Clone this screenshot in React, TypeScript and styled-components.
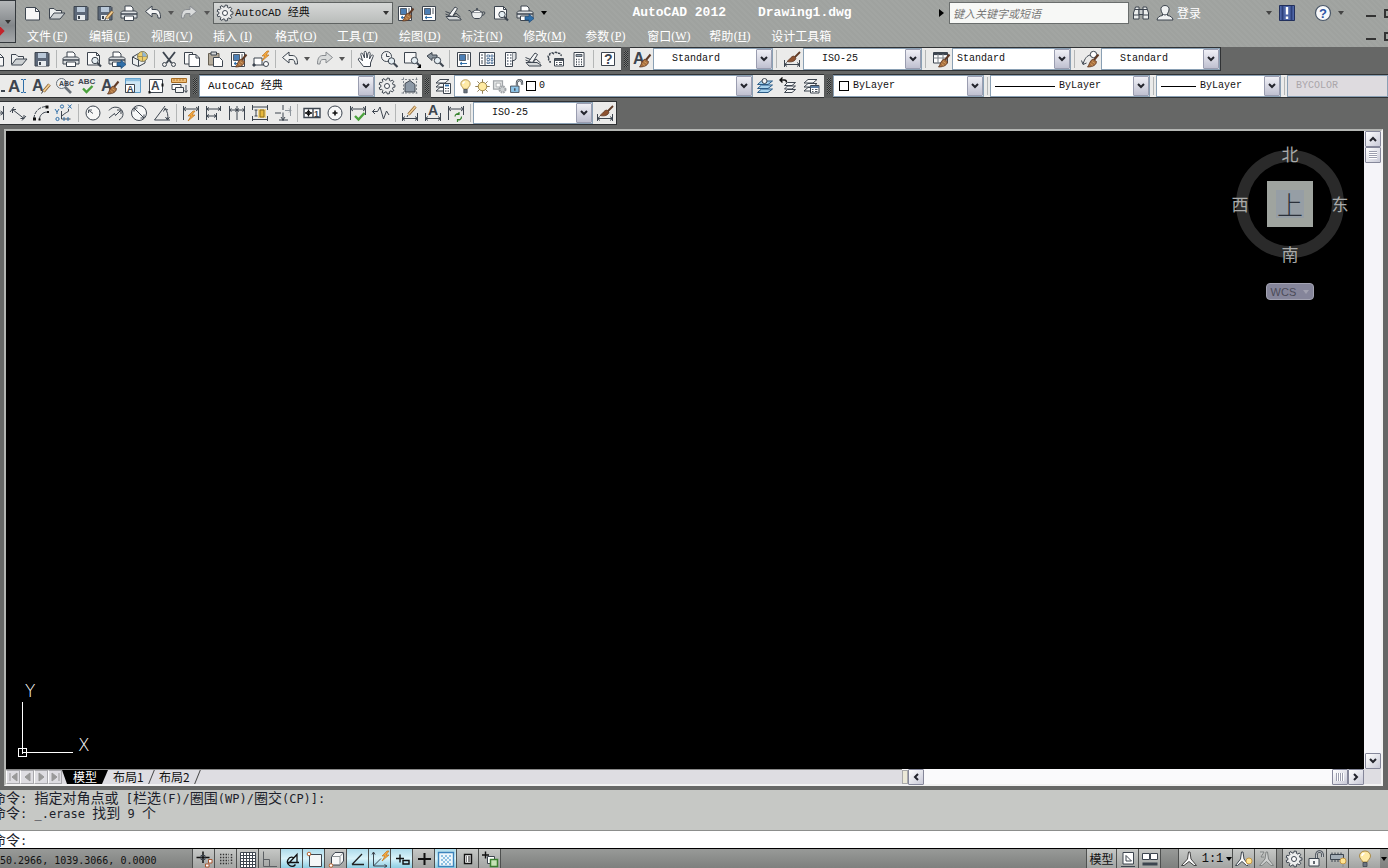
import React from 'react';
import styled, { createGlobalStyle, css } from 'styled-components';

const CJK = '"Noto Sans CJK SC", sans-serif';
const MONO = '"Liberation Mono", "Noto Sans CJK SC", monospace';
const INK = '#3d454f';
const BLUE = '#2f6ea8';

const GlobalStyle = createGlobalStyle`
  * { box-sizing: border-box; }
  html, body { margin: 0; background: #666766; }
  body { overflow: hidden; font: 12px/16px ${CJK}; color: #111; }
  button, input, select { font: inherit; color: inherit; margin: 0; padding: 0; border: 0; background: none; border-radius: 0; }
`;

/* ---------- icon drawings, all on a 20 x 20 grid ---------- */

const Letter = ({ x, y, size = 15, heavy, children }: { x: number; y: number; size?: number; heavy?: boolean; children: string }) => (
  <text x={x} y={y} fontSize={size} fontFamily="Liberation Sans, sans-serif" fontWeight={heavy ? 'bold' : 'normal'} fill={INK} stroke={heavy ? 'none' : INK} strokeWidth=".4">
    {children}
  </text>
);

const gearPath = (teeth: number, outer: number, inner: number) => {
  const pts: string[] = [];
  const step = (Math.PI * 2) / teeth;
  for (let i = 0; i < teeth; i++) {
    [[-0.3, inner], [-0.2, outer], [0.2, outer], [0.3, inner]].forEach(([k, r]) => {
      const a = (i + k) * step;
      pts.push(`${(10 + r * Math.cos(a)).toFixed(2)} ${(10 + r * Math.sin(a)).toFixed(2)}`);
    });
  }
  return `M${pts.join('L')}z`;
};

const brush = (
  <g>
    <path d="M18.500 5.500l-4.500 5.500" stroke="#5f3a26" strokeWidth="2" />
    <path d="M13 10l3.500 2.500c0 3-3 5.500-9 5.500c2-2 2-6.500 5.500-8z" fill="#a9713f" stroke="#5f3a26" strokeWidth=".8" />
    <path d="M12 12.500l3 2M10.500 14.500l2.500 2" stroke="#d9a566" strokeWidth=".8" />
  </g>
);
const pencil = (
  <g>
    <path d="M17.500 8.500l-6 7" stroke="#8a6334" strokeWidth="3.400" />
    <path d="M17.500 8.500l-6 7" stroke="#f3cf92" strokeWidth="1.800" />
    <path d="M11 15l-1.500 2.500" stroke="#333" />
  </g>
);
const floppy = (
  <g>
    <path d="M3 3.500h13l1 1V17H3z" fill="#5c6879" />
    <path d="M6 4h8v5H6z" fill="#b9c8d8" stroke="none" />
    <path d="M6 12h8v5H6z" fill="#e8ecef" stroke="none" />
    <path d="M7 13h2v3H7z" fill={INK} stroke="none" />
  </g>
);
const printer = (
  <g>
    <path d="M6 9V3h6l2 2v4" fill="#fff" />
    <path d="M3.500 8h13l1.500 1.500V15H2V9.500z" fill="#dcdfe1" />
    <path d="M2 11h16" strokeWidth="1.500" />
    <path d="M5.500 13h9v4.500h-9z" fill="#fff" />
  </g>
);
const panel = (
  <g>
    <path d="M3.500 3.500h13v14h-13z" fill="#fff" />
    <path d="M5.500 5.500h6v6h-6z" fill="#4c7fb5" stroke={INK} strokeWidth=".8" />
    <path d="M13 6h2M13 8h2M13 10h2" strokeWidth=".9" />
    <path d="M6 14.500h7M8 13l-2 1.500L8 16" stroke={BLUE} />
  </g>
);
const sheets = (
  <g>
    <path d="M3 15l4-3.500h9l-4 3.500z" fill="#f6f7f7" />
    <path d="M3 11l4-3.500h9L12 11z" fill="#f6f7f7" />
    <path d="M3 7l4-3.500h9L12 7z" fill="#f6f7f7" />
  </g>
);
const gear = (r: number) => (
  <g>
    <path d={gearPath(9, 8, 6.2)} fill="#eceded" />
    <circle cx="10" cy="10" r={r} fill="#fff" />
  </g>
);
const bolt = <path d="M15 2l-5 5h3l-3 5l7-6h-3l3-4z" fill="#f5a93f" stroke="#c07720" strokeWidth=".7" />;
const dimLine = <path d="M2.500 10v8M17.500 10v8M2.500 15.500h15M5 13.500l-2.500 2l2.500 2M15 13.500l2.500 2l-2.500 2" />;
const topDim = <path d="M2.500 3v14M17.500 3v9M2.500 6h15M5 4L2.500 6L5 8M15 4l2.500 2L15 8" />;
const lens = (x: number, y: number) => (
  <g>
    <path d={`M${x + 2} ${y + 2}l4 4`} strokeWidth="2.200" />
    <circle cx={x} cy={y} r="3.200" fill="#e4edf2" />
  </g>
);
const miniBulb = (
  <g>
    <circle cx="15" cy="12" r="3" fill="#ffe493" stroke="#c08a2e" strokeWidth=".8" />
    <path d="M14 15h2v3h-2z" fill="#999" stroke="none" />
  </g>
);
const openLock = (body: string) => (
  <g>
    <path d="M3 9.500h10V17H3z" fill={body} />
    <path d="M10.500 9V5.500a3 3 0 0 1 6 0V8" strokeWidth="2.600" />
    <path d="M10.500 9V5.500a3 3 0 0 1 6 0V8" stroke="#e8eaea" strokeWidth=".8" />
    <path d="M8 12v3" strokeWidth="1.600" />
  </g>
);

const drawings: Record<string, React.ReactNode> = {
  new: <><path d="M3 4.500h9.500l4 4V17h-13.500l-.5-.5V5z" fill="#f6f6f6" /><path d="M12.500 4.500v4h4" /></>,
  open: <><path d="M2.500 15V5.500H7l2 2h5.500V10" fill="#eef0f0" /><path d="M2.500 16L7 10h11l-5 6z" fill="#cdd1d3" /></>,
  save: floppy,
  saveAs: <>{floppy}{pencil}</>,
  print: printer,
  preview: <><path d="M3.500 3.500h9l3 3V16h-12z" fill="#fafafa" /><path d="M12.500 3.500v3h3" />{lens(11, 11.5)}</>,
  publish: <>{printer}<path d="M10 13.500h4V11l5 4.500l-5 4V17h-4z" fill={BLUE} stroke="#1c4a78" strokeWidth=".7" /></>,
  globe: <><path d="M2.500 8l6-3.500L15 8v6l-6.500 3.500l-6-2.500z" fill="#eceeee" /><path d="M2.500 8l6 3v6" /><circle cx="12.500" cy="7.500" r="5" fill="#efcf6a" stroke="#7c7b62" /><path d="M12.500 2.500v10M7.500 7.500h10" stroke="#97834a" strokeWidth=".8" /><path d="M12.500 3a5 5 0 0 1 4 4.500h-4z" fill="#8fb7d6" stroke="none" /></>,
  cut: <><path d="M4 3l8.500 11M16 3L7.500 14" strokeWidth="1.900" /><circle cx="5.500" cy="15.500" r="2" /><circle cx="14.500" cy="15.500" r="2" /></>,
  copy: <><path d="M2.500 3.500h8V15h-8z" fill="#fafafa" /><path d="M7 5.500h7l3.500 3.500v8.500H7z" fill="#fff" /><path d="M14 5.500V9h3.500" /></>,
  paste: <><path d="M3.500 4.500H14V16H3.500z" fill="#b5ac9c" stroke="#665f52" /><path d="M6 3h5.500v3H6z" fill="#d6d8d8" /><path d="M8.500 8.500h6l3 3v6h-9z" fill="#fff" /></>,
  match: <>{panel}{brush}</>,
  blockEdit: <><path d="M3 16V9h8v7z" fill="#fff" /><circle cx="15" cy="15" r="2.500" fill="#fff" /><path d="M11 16h2" /><path d="M2 15h2v2H2z" fill={INK} /><g transform="translate(1 0)">{bolt}</g></>,
  undo: <path d="M2.500 8.500L9 3v3.500h3c4 0 5.500 3 5.500 8.500h-2.500c0-3-1-4.500-3-4.500H9V14z" fill="#f2f3f3" />,
  redo: <path d="M17.500 8.500L11 3v3.500H8c-4 0-5.500 3-5.500 8.500H5c0-3 1-4.500 3-4.500h3V14z" fill="#dadcdc" stroke="#888c90" />,
  hand: <path d="M7.500 17.500l-5-6.500c-.8-1.500 1-2.500 2-1.200l2 2L4.800 5.500c-.4-1.500 1.500-1.900 2-.5L8.500 9L8.200 3.500c0-1.500 2-1.500 2.100 0L11 9l1.200-5c.5-1.300 2.200-.9 2 .5L13.500 10l1.800-3.500c.8-1.200 2.300-.5 1.900.8L14.500 14v3.500z" fill="#fff" />,
  zoomTime: <><circle cx="7.500" cy="7.500" r="5" fill="#f2f3f3" /><path d="M7.500 4.500v3h3" />{lens(12.5, 12)}</>,
  zoomWindow: <><path d="M2.500 3.500H14V14H2.500z" fill="#f7f7f7" />{lens(12.5, 11.5)}<path d="M19 15v4h-4z" fill="#000" stroke="none" /></>,
  zoomPrev: <><path d="M2 7l5-3.500V6h5v3H7v2.500z" fill="#8b959e" />{lens(12.5, 11.5)}</>,
  props: panel,
  designCenter: <><path d="M2.500 3.500h15v13h-15z" fill="#fff" /><path d="M8 3.500v13M4 6h2M4 9h2M4 12h2M4 14h2" /><path d="M10 6h2.500v2H10zM14 6h2v2h-2zM10 9.500h2.500v2H10zM14 9.500h2v2h-2zM10 13h2.500v1.500H10zM14 13h2v1.500h-2z" stroke="#55779c" strokeWidth=".9" /></>,
  toolPalette: <><path d="M5.500 3.500h7v14h-7z" fill="#fff" /><path d="M12.500 3.500H16V10l-2 1.500h-1.500" fill="#dfe2e4" /><path d="M7 6h1.500M10 6h1.500M7 9h1.500M10 9h1.500M7 12h1.500M10 12h1.500M7 15h1.500M10 15h1.500" strokeWidth="1.500" stroke="#6b7682" /></>,
  sheetSet: <><path d="M3 13.500h11l4 2.500v1H6z" fill="#d6d9da" /><path d="M5.500 12.500L12 4l2.500 1.500l-5 8z" fill="#f4f5f5" /><path d="M2.500 8.500l5 2M2.500 11l3.500 1.500M10 13.500l3-3.500l4.500 4" fill="none" /></>,
  markup: <><path d="M3 9c-1.500-1-1-3 .5-3c0-2 2.500-3 4-1.500c1-1.500 3.500-1.500 4 0c2-1 4 .5 3.500 2.500M3 9c-1 2 0 4 2 4" strokeDasharray="2.500 1" strokeWidth="1.500" /><path d="M8.500 9.500h9V17h-9z" fill="#fff" /><path d="M8.500 11h9" strokeWidth="1.800" /><path d="M10 13.500h1.500M13 13.500h3M10 15.500h1.500M13 15.500h3" strokeWidth=".9" /></>,
  calc: <><path d="M5 3.500h10v14H5z" fill="#fff" /><path d="M7 5.500h6v2H7z" fill="#9aa7b3" strokeWidth=".8" /><path d="M7 10.500h1M9.500 10.500h1M12 10.500h1M7 13h1M9.500 13h1M12 13h1M7 15.500h1M9.500 15.500h1M12 15.500h1" strokeWidth="1.400" /></>,
  help: <><path d="M3.500 3.500h13v13h-13z" fill="#fff" /><Letter x={6} y={15} size={14} heavy>?</Letter></>,
  teapot: <><path d="M5.500 11L3 7.500H1.500M15 9.500c2.500-1.500 3.500 0 2.500 1.500c-.8 1.200-2 1.500-3 1.500" /><path d="M5 9h10c1 3-1 6.500-3 6.500H8C6 15.500 4 12 5 9z" fill="#eceeee" /><path d="M6 9c1-2.500 7-2.500 8 0" fill="#fff" /><path d="M9 6h2" strokeWidth="1.600" /></>,
  textStyle: <><Letter x={1} y={15} size={16} heavy>A</Letter>{brush}</>,
  textClip: <><Letter x={1} y={15} size={16} heavy>A</Letter><path d="M15 15h4" strokeWidth="2" /></>,
  dimStyle: <><path d="M2.500 11v7M17.500 11v7M2.500 15.500h15M5 13.500l-2.500 2l2.500 2M15 13.500l2.500 2l-2.500 2" /><path d="M18 3l-5 5" stroke="#5f3a26" strokeWidth="1.800" /><path d="M12 7c-3 0-4 3.500-7 5.500c4 1 8.500 0 9-3.500z" fill="#8d5230" stroke="#5f3a26" strokeWidth=".8" /></>,
  tableStyle: <><path d="M2.500 3.500h14V14h-14z" fill="#fff" /><path d="M2.500 5h14" strokeWidth="2.200" /><path d="M2.500 9h14M7 5v9M12 5v9" stroke="#7c8289" />{brush}</>,
  leaderStyle: <><circle cx="13.500" cy="5.500" r="3.200" fill="#fff" /><path d="M10.500 6C7 6.500 5 9 3 15M1.500 11.500L3 15.500l3.500-1.500" />{brush}</>,
  mtext: <><Letter x={0} y={16} size={17} heavy>A</Letter><path d="M15.500 4v12M13 3.500h2l.5.5l.5-.5h2M13 16.500h2l.5-.5l.5.5h2" stroke={BLUE} /></>,
  textEdit: <><Letter x={1} y={15} size={16} heavy>A</Letter><g transform="translate(1 0)">{pencil}</g></>,
  find: <><path d="M11 11l6 6" strokeWidth="2.600" stroke="#69717a" /><circle cx="7.500" cy="7.500" r="5" fill="#eef1f2" stroke="#69717a" /><Letter x={5} y={10} size={7} heavy>ABC</Letter></>,
  spell: <><Letter x={1} y={8} size={8} heavy>ABC</Letter><path d="M6 12.500l3.500 3.500l6-6" stroke="#4aa23c" strokeWidth="2.400" /></>,
  textScale: <><path d="M2.500 2.500h15v14h-15z" fill="#cfe6f4" stroke="#5c9bc8" /><path d="M3 4h14" stroke="#8cbfe0" strokeWidth="2.400" /><path d="M2.500 8.500h9v8h-9z" fill="#fff" /><Letter x={4} y={16} size={9} heavy>A</Letter></>,
  justify: <><path d="M3.500 3.500h13v13h-13z" fill="#fff" /><Letter x={5} y={14} size={12} heavy>A</Letter><path d="M15.500 7.500h2v3h-2zM2.500 15h2v2.500h-2z" fill="#111" stroke="none" /></>,
  spaceTrans: <><path d="M2.500 2.500h15v4h-15z" fill="#eebc74" stroke="#a66b22" /><path d="M5 3v2M8 3v2M11 3v2M14 3v2" stroke="#a66b22" strokeWidth=".8" /><path d="M3 8.500h9v5H3z" fill="#fff" /><path d="M6.500 11.500h8v5h-8zM17 9v7M15.500 14.500L17 16.500l1.500-2" fill="#f4f5f5" /></>,
  gear: gear(2.5),
  wsSave: <><path d="M5 7.500l5-3l5 4V16H5z" fill="#8d99a6" /><path d="M1.500 3.500h17M1.500 17h17M3.500 1.500v17M16.500 1.500v17" strokeDasharray="2 1.500" stroke="#7e858c" /></>,
  layerProps: <>{sheets}<path d="M10.500 7.500h7v10h-7z" fill="#fff" /><path d="M12 9.500h4" stroke={BLUE} strokeWidth="1.800" /><path d="M12 12.500h1.500M14.500 12.500H16M12 15h1.500M14.500 15H16" /></>,
  bulb: <><path d="M7.500 13c0-2-3-3-3-6a5.500 5 0 0 1 11 0c0 3-3 4-3 6z" fill="#ffeaa6" stroke="#a98a46" /><path d="M8 13.500h4v4H8z" fill="#6d7580" strokeWidth=".8" /><path d="M7 7c0-1.500 1-2.500 2.500-2.500" stroke="#fff" strokeWidth="1.500" /></>,
  sun: <><path d="M10 1.500v17M1.500 10h17M4 4l12 12M4 16L16 4" stroke="#7e6a3c" /><circle cx="10" cy="10" r="5" fill="#ffeaa0" stroke="#8f7638" /></>,
  vpFreeze: <g stroke="#a0a4a8"><path d="M3 3.500h10.500V13H3z" fill="#e6e8e8" strokeWidth="1.500" /><path d="M6 6h5v4.500H6z" fill="#fff" /><circle cx="13.500" cy="13.500" r="3.500" fill="#ccd0d2" strokeWidth="2.400" strokeDasharray="1.800 1" /></g>,
  unlock: openLock('#8cc4e8'),
  layerCurrent: <><path d="M2.500 16.500l4-3.500h11l-4.500 3.500zM2.500 12.500L6.500 9h11L13 12.500zM2.500 8.500L6.500 5h11L13 8.500z" fill="#a8d3ee" stroke="#2a5b86" /><circle cx="9.500" cy="5" r="2.500" fill="#f2f4f4" /></>,
  layerPrev: <><path d="M6.500 16.500l3-3h8l-3.500 3zM6.500 13l3-3h8L14 13zM6.500 9.500l3-3h8L14 9.500z" fill="#f6f7f7" /><path d="M2 4h4.500c1.500 0 2 1 2 2.500M4.500 1.500L2 4l2.500 2.500" strokeWidth="1.400" stroke="#111" /></>,
  layerState: <>{sheets}<path d="M9.500 9.500h8.500V17H9.500z" fill="#fff" /><path d="M9.500 11H18" strokeWidth="1.800" stroke="#4a6f98" /><path d="M11 13.500h1.500M14 13.500h2.500M11 15.500h1.500M14 15.500h2.500" strokeWidth=".9" /></>,
  dimLinear: <path d="M2 3v14M17.500 3v14M2 10h15M5 8l-3 2l3 2M14.500 8l3 2l-3 2" />,
  dimAligned: <path d="M2 9l4-5M14 17.500l4-4.500M4.500 6.500l11.500 9M4.500 10V6.500H8M16 12v3.500h-3.500" />,
  dimArc: <><path d="M3 16c0-7 5-12.500 13-12.500" strokeDasharray="4 1" /><path d="M8.500 16.500c0-4 3-7.500 8-7.500" /><path d="M2 14.500h3v3H2zM14.500 2.500h3v3h-3zM7.500 15.500h2v2h-2zM16 8h2v2h-2z" fill="#111" stroke="none" /></>,
  dimOrdinate: <><path d="M7.500 8v8h9M7.500 13l3-2c1-2 3-1 4-3v-2" /><path d="M1 6l2 3v2M5 6L3 9M14 1.500l3.500 4M17.500 1.500l-3.500 4" stroke={BLUE} /><path d="M10 14v4M14 14v4" stroke={BLUE} /><circle cx="3.500" cy="16" r="1.600" stroke={BLUE} /><circle cx="8" cy="3.500" r="1.600" stroke={BLUE} /></>,
  dimRadius: <><circle cx="10" cy="10" r="7" fill="#f7f8f8" /><path d="M10 10.500L6 7.500M5.500 10V7H9" strokeWidth=".9" /></>,
  dimJogged: <path d="M3 7.500c3.500-5.500 13.500-4 14 3c.2 3-1.500 5-4 6.500M3 15l5.500-4.500l1 2l5-5M11 7h4v4" />,
  dimDiameter: <><circle cx="10" cy="10" r="7.500" fill="#f7f8f8" /><path d="M5 5l10 10M5 8.500V5h3.500M15 11.500V15h-3.500" /></>,
  dimAngular: <path d="M13 3L2.500 17H18M13 5.500c2.500 3 3.500 7 2.500 11M11.500 8.500l1.500-3l3 1.500M13.500 14l2 3l2-3" />,
  dimQuick: <><path d="M2.500 3v14M17.500 3v14M2.500 6h15M5 4L2.500 6L5 8M15 4l2.500 2L15 8" /><g transform="translate(-3 6)">{bolt}</g></>,
  dimBaseline: <path d="M2.500 3v14M16.500 3v5M12.500 10v7M2.500 6h14M2.500 13h10M5 4.500L2.500 6L5 7.500M5 11.500L2.500 13L5 14.500M14 4.500L16.500 6L14 7.500M10 11.500l2.500 1.500l-2.500 1.500" />,
  dimContinue: <path d="M2.500 3v14M10 3v14M17.500 3v14M2.500 7h15M4.500 5.500L2.500 7l2 1.500M8 5.500L10 7L8 8.500M12 5.500L10 7l2 1.500M15.500 5.500l2 1.500l-2 1.500" />,
  dimSpace: <><path d="M8 6h8v9H8z" fill="#f1d488" stroke="none" /><path d="M10 7h4v7h-4z" fill="#e9b93c" stroke="#8b6f20" /><path d="M2.500 2v5M17.500 2v5M2.500 4h15M2.500 13v5M17.500 13v5M2.500 16.500h15M6 7v6M4.500 7h3M4.500 13h3" /></>,
  dimBreak: <><path d="M10 2v5M10 9.500V18M2 10h6M6 17h9" /><path d="M12 7.500h6M16 5.500l2 2l-2 2M17.500 3v10" stroke="#8f969d" /><path d="M10 17l-2-3M10 17l2-3" /></>,
  tolerance: <><path d="M2 5.500h16v9H2zM11 5.500v9" fill="#fff" strokeWidth="1.400" /><path d="M3 10h7M6.500 6.500v7" strokeWidth="1.300" stroke="#111" /><circle cx="6.500" cy="10" r="1.800" stroke="#111" /><Letter x={12} y={14} size={9} heavy>1</Letter></>,
  centerMark: <><circle cx="10" cy="10" r="7" fill="#f7f8f8" /><path d="M10 7.500v5M7.500 10h5" strokeWidth="1.600" stroke="#111" /></>,
  dimInspect: <>{topDim}<path d="M7 13l3.500 3.500l6-6.500" stroke="#4aa23c" strokeWidth="2.400" /></>,
  jogLine: <path d="M1.500 8.500h5L9 4l3.500 12l3-8l2.500 4M4 6L1.500 8.500L4 11" />,
  dimEdit: <>{dimLine}<path d="M15.500 3.500l-7 8" stroke="#8a6334" strokeWidth="3" /><path d="M15.500 3.500l-7 8" stroke="#f3cf92" strokeWidth="1.500" /><path d="M8 12l-1 2" /></>,
  dimTextEdit: <>{dimLine}<Letter x={5} y={12} size={14} heavy>A</Letter></>,
  dimUpdate: <>{topDim}<path d="M9 13.500a3 3 0 0 1 4.500-2.500M15.500 13.500a3 3 0 0 1-4.500 3M13 9v2.500h-2.500M11.500 19v-2.500H14" stroke="#37842f" strokeWidth="1.200" /></>,
  binoculars: <><path d="M2.500 16V10l2-6h3.500v12zM17.500 16V10l-2-6H12v12z" fill="#eceeee" /><path d="M8 6.500h4v5H8z" fill="#c9cdcf" /><path d="M2.500 12H8M12 12h5.500M4 6.500h4M12 6.500h4" /></>,
  user: <><path d="M7.500 11v1.500c-3 .5-5 1.500-5.500 4.500h16c-.5-3-2.500-4-5.500-4.500V11" fill="#f0f2f3" /><path d="M10 2.500c3 0 4.500 2 4 4.500c-.4 2.500-2 5-4 5s-3.600-2.500-4-5c-.5-2.500 1-4.500 4-4.500z" fill="#f0f2f3" /></>,
  exchange: <><path d="M2.500 2.500h15v15h-15z" fill="#4d65a6" stroke="#22305c" /><path d="M5.500 3v14M14.500 3v14" stroke="#2c3f7a" strokeWidth="1.800" /><path d="M10 4v7.500M10 13.500V16" stroke="#fff" strokeWidth="2.400" /></>,
  infoHelp: <><circle cx="10" cy="10" r="7.500" fill="#f7f8fa" stroke="#4a5768" strokeWidth="1.200" /><text x="6" y="15" fontSize="13" fontWeight="bold" fontFamily="Liberation Sans, sans-serif" fill="#2d54a5" stroke="none">?</text></>,
  infer: <><path d="M9 2.500V14M2.500 8.500h13" strokeWidth="1.500" stroke="#111" /><path d="M7 6.500h4v4H7z" /><path d="M14.500 10.500h3.500V14h-3.500zM11.500 15h3.500v3h-3.500z" fill="#fff" stroke="#a9552e" /></>,
  snap: <path d="M4 5.500h9M4 8.500h9M4 11.500h9M4 14.500h9M15.500 5v10" strokeWidth="1.400" stroke="#333" strokeDasharray="1.400 1.400" />,
  grid: <><path d="M2.500 3.500h15v15h-15z" fill="#fff" /><path d="M5.500 3.500v15M8.500 3.500v15M11.500 3.500v15M14.500 3.500v15M2.500 6.500h15M2.500 9.500h15M2.500 12.500h15M2.500 15.500h15" /></>,
  ortho: <path d="M3.500 2.500v15H17M3.500 10.500h6v7" stroke="#5c6064" />,
  polar: <path d="M5 13.500h12M6.500 14.500L15 5.500v8M11.500 8.500a4.500 4.500 0 1 0 2 7" strokeWidth="1.300" stroke="#111" />,
  osnap: <><path d="M5.500 5.500h12v12h-12z" fill="#f4f6f7" /><circle cx="5" cy="5" r="1.800" fill="#fff" stroke="#b8622e" /></>,
  osnap3d: <><path d="M5.500 7.500L9 3.500h8.500V12L14 16H5.500z" fill="#f6f7f7" /><path d="M5.500 7.500H14V16M14 7.500l3.500-4" stroke="#8d9294" /><circle cx="5" cy="16.500" r="1.800" fill="#fff" stroke="#b8622e" /></>,
  otrack: <path d="M4 15.500h12M4 15.500L14 5" strokeWidth="1.300" stroke="#222" />,
  ducs: <><path d="M3.500 3v14H17M3.500 17L11 9.500M2 5.500L3.500 3L5 5.500M14.500 15.500L17 17l-2.500 1.500" /><g transform="translate(2 0)">{bolt}</g></>,
  dyn: <path d="M4 9.500h8M8 5.500v8M11 11.500h6v3.500h-6z" strokeWidth="1.400" stroke="#111" />,
  lineweight: <path d="M4 10h13M10.500 4v12" stroke="#111" strokeWidth="2" />,
  transparency: <><path d="M2.500 3.500h15v14h-15z" fill="#eef6fb" stroke="#3c83bb" strokeWidth="1.400" /><path d="M5 6h2v2H5zM9 6h2v2H9zM13 6h2v2h-2zM7 8h2v2H7zM11 8h2v2h-2zM5 10h2v2H5zM9 10h2v2H9zM13 10h2v2h-2zM7 12h2v2H7zM11 12h2v2h-2zM5 14h2v2H5zM9 14h2v2H9zM13 14h2v2h-2z" fill="#8fc1e2" stroke="none" /></>,
  quickProps: <><path d="M6.500 5.500h7v9h-7z" fill="#fff" stroke="#111" strokeWidth="1.400" /><path d="M8 8h1M8 10h1M8 12h1M10 8h2.500M10 10h2.500M10 12h2.500" stroke="#111" /></>,
  cycling: <><path d="M5.500 2.500v7M2 6h7" strokeWidth="1.400" stroke="#111" /><path d="M7.500 7.500h7v7h-7z" fill="#fff" /><path d="M10.500 10.500h7v7h-7z" fill="#c4e2b4" stroke="#3c7f31" strokeWidth="1.500" /></>,
  layoutA: <><path d="M5 3.500h10.500v11.500H5z" fill="#fff" /><path d="M8 6.500v5.500h5.500zM3 17.500h14" /></>,
  layoutB: <><path d="M2.500 4.500h7v6h-7zM10.500 4.500h7v6h-7z" fill="#fff" /><path d="M2.500 15h15" strokeWidth="3" /></>,
  anno: <path d="M9.500 3h1.500l1 7l5.500 6.500h-2.500L10 12.500l-5 4H2.500L8.500 10z" fill="#fafafa" stroke="#444" />,
  annoVis: <><path d="M7.500 3H9l1 7l5 6.500h-2.500L8 12.500l-4.500 4H1.500L6.500 10z" fill="#fafafa" />{miniBulb}</>,
  annoAuto: <path d="M10 3h1.500l1 7l5 6.500h-2.500l-4.500-4l-4.500 4H3.500L9 10zM4 3h4L5 8h3" fill="#cfd1d0" stroke="#7f8382" />,
  statusGear: gear(2.5),
  statusLock: openLock('#f3f4f4'),
  hardware: <><path d="M2.500 5.500h13v5h-13z" fill="#a3adb6" /><path d="M4 3.500v2M7 3.500v2M10 3.500v2M13 3.500v2M4 11v2M7 11v2M10 11v2" />{miniBulb}</>,
};

const Glyph = styled.svg`
  display: block;
  flex: none;
  width: 20px;
  height: 20px;
  fill: none;
  stroke: ${INK};
  stroke-width: 1;
`;
const Icon = ({ name }: { name: string }) => <Glyph viewBox="0 0 20 20" aria-hidden="true">{drawings[name]}</Glyph>;

const Caret = styled.span<{ $tone?: string }>`
  flex: none;
  border: 3px solid transparent;
  border-top: 4px solid ${p => p.$tone || '#333'};
  border-bottom: 0;
`;

/* ---------- header ---------- */

const Page = styled.div`
  min-height: 100vh;
  display: flex;
  flex-direction: column;
  overflow: hidden;
`;
const Header = styled.header`
  display: flex;
  height: 47px;
  background: repeating-linear-gradient(45deg, #9fa29f 0 2px, #a2a5a2 2px 4px);
`;
const AppButton = styled.button`
  width: 16px;
  height: 43px;
  border: 1px solid #33383c;
  border-left: 0;
  background: linear-gradient(#b4b7b9, #83878a 60%, #a5a8aa);
  display: flex;
  flex-direction: column;
  align-items: center;
  justify-content: center;
  position: relative;
  overflow: hidden;
  &::after {
    content: '';
    position: absolute;
    left: -5px;
    top: 26px;
    width: 8px;
    height: 8px;
    background: #c4232b;
    transform: rotate(45deg);
  }
`;
const HeaderRows = styled.div`
  flex: 1;
  min-width: 0;
`;
const TitleRow = styled.div`
  display: flex;
  align-items: center;
  height: 26px;
  padding-left: 5px;
`;
const QuickButton = styled.button`
  width: 24px;
  height: 24px;
  display: flex;
  align-items: center;
  justify-content: center;
  flex: none;
`;
const DropButton = styled.button<{ $w?: number }>`
  width: ${p => p.$w || 12}px;
  height: 22px;
  flex: none;
  display: flex;
  align-items: center;
  justify-content: center;
`;
const WorkspaceBox = styled.label`
  display: flex;
  align-items: center;
  width: 180px;
  height: 22px;
  flex: none;
  padding: 0 3px 0 1px;
  border: 1px solid #5f6362;
  background: linear-gradient(#d6d8d7, #b9bcba);
  font: 11px/16px ${MONO};
`;
const BareSelect = styled.select<{ $pad?: number }>`
  appearance: none;
  flex: 1;
  min-width: 0;
  width: 0;
  height: 100%;
  padding-left: ${p => p.$pad || 0}px;
  outline: 0;
  opacity: 1;
  &:disabled { color: #aaa6aa; }
`;
const Title = styled.h1`
  flex: 1;
  margin: 0;
  padding-right: 6px;
  display: flex;
  justify-content: center;
  gap: 32px;
  font: bold 13px/20px ${MONO};
  color: #fff;
  white-space: nowrap;
`;
const Search = styled.input`
  width: 180px;
  height: 22px;
  padding: 0 3px;
  border: 1px solid #6a6e6d;
  background: #f7f8f6;
  font: italic 11px/16px ${CJK};
  &::placeholder { color: #777; opacity: 1; }
`;
const SearchArrow = styled.span`
  border: 4px solid transparent;
  border-left: 5px solid #000;
  border-right: 0;
  margin-right: 5px;
`;
const SignIn = styled.button`
  color: #fff;
  width: 86px;
  text-align: left;
`;
const WindowControls = styled.div`
  display: flex;
  align-items: center;
  gap: 8px;
  margin-left: auto;
  width: 22px;
  flex: none;
  overflow: hidden;
`;
const Minimize = styled.button`
  width: 10px;
  height: 8px;
  flex: none;
  border-bottom: 2px solid #333;
`;
const Restore = styled.button`
  width: 11px;
  height: 9px;
  flex: none;
  border: 2px solid #333;
`;
const MenuRow = styled.nav`
  display: flex;
  align-items: center;
  gap: 20px;
  height: 20px;
  padding-left: 11px;
`;
const MenuButton = styled.button`
  display: flex;
  align-items: center;
  color: #fff;
  white-space: nowrap;
`;
const Accel = styled.span`
  width: 18px;
  font: 12px/16px "Liberation Serif", serif;
`;

/* ---------- toolbars ---------- */

const Dock = styled.div`
  display: flex;
  flex-direction: column;
  gap: 3px;
  padding-bottom: 4px;
  background: #666766;
`;
const DockRow = styled.div`
  display: flex;
`;
const Bar = styled.div<{ $grow?: boolean; $end?: number }>`
  display: flex;
  align-items: center;
  height: 24px;
  padding-right: ${p => p.$end || 0}px;
  border: 1px solid #303234;
  border-width: 1px 0;
  background: #ebebea;
  box-shadow: 1px 0 0 #303234;
  flex: ${p => (p.$grow ? '1' : 'none')};
`;
const Grip = styled.div`
  width: 9px;
  height: 24px;
  flex: none;
  border: solid #595b5b;
  border-width: 4px 2px 4px 3px;
  background: repeating-conic-gradient(#2e3030 0 25%, #757777 0 50%) 0 0 / 2px 2px;
`;
const ToolButton = styled.button<{ $clip?: number }>`
  width: ${p => p.$clip || 23}px;
  height: 22px;
  flex: none;
  overflow: hidden;
  display: flex;
  align-items: center;
  justify-content: ${p => (p.$clip ? 'flex-end' : 'center')};
`;
const Divider = styled.i<{ $w?: number }>`
  width: ${p => p.$w || 6}px;
  height: 18px;
  flex: none;
  background: linear-gradient(#b4b6b6, #b4b6b6) center / 1px 100% no-repeat;
`;
const Combo = styled.label<{ $w?: number; $large?: boolean; $off?: boolean }>`
  ${p => (p.$w ? css`width: ${p.$w}px; flex: none;` : css`flex: 1;`)}
  display: flex;
  align-items: center;
  height: 22px;
  border: 1px solid #8aa0b4;
  background: ${p => (p.$off ? '#dedbdf' : '#fff')};
  font: ${p => (p.$large ? 11 : 10)}px/16px ${MONO};
`;
const ArrowBox = styled.span`
  width: 16px;
  height: 20px;
  flex: none;
  border: 1px solid #9a9db0;
  border-radius: 1px;
  background: linear-gradient(#f0f0f6, #bfc0d0);
  display: flex;
  align-items: center;
  justify-content: center;
`;
const Swatch = styled.i`
  width: 10px;
  height: 10px;
  margin-left: 5px;
  border: 1px solid #000;
  flex: none;
`;
const LineSample = styled.i<{ $w: number }>`
  width: ${p => p.$w}px;
  height: 1px;
  margin-left: 4px;
  background: #000;
  flex: none;
`;
const LayerIcons = styled.span`
  display: flex;
  margin-left: 2px;
  margin-right: -4px;
  svg { width: 17px; height: 17px; }
`;

const Chevron = ({ d = 'M1 2l3 3l3-3' }: { d?: string }) => (
  <svg width="8" height="8" viewBox="0 0 8 8" aria-hidden="true"><path d={d} fill="none" stroke="#23242c" strokeWidth="2" /></svg>
);

type PickProps = { label: string; value: string; w?: number; pad?: number; large?: boolean; lead?: React.ReactNode };
const Pick = ({ label, value, w, pad = 4, large, lead }: PickProps) => (
  <Combo $w={w} $large={large}>
    {lead}
    <BareSelect aria-label={label} $pad={pad}><option>{value}</option></BareSelect>
    <ArrowBox><Chevron /></ArrowBox>
  </Combo>
);

const Tools = ({ names }: { names: string[] }) => (
  <>
    {names.map((n, i) =>
      n === '|' ? <Divider key={i} /> : n === 'v'
        ? <DropButton key={i} aria-label="更多"><Caret $tone="#555" /></DropButton>
        : <ToolButton key={i} aria-label={n}><Icon name={n} /></ToolButton>)}
  </>
);

/* ---------- drawing window ---------- */

const Frame = styled.main`
  flex: 1;
  display: flex;
  flex-direction: column;
  margin: 0 5px 0 4px;
  border: 2px solid #b4b6b3;
  border-color: #b4b6b3 #f2f2f2 #f2f2f2 #b4b6b3;
`;
const CanvasRow = styled.div`
  flex: 1;
  display: flex;
`;
const Canvas = styled.section`
  flex: 1;
  position: relative;
  background: #000;
`;
const VScroll = styled.div`
  width: 17px;
  display: flex;
  flex-direction: column;
  align-items: center;
  background: #f5f4f9;
`;
const ScrollPiece = styled.button`
  width: 16px;
  height: 16px;
  flex: none;
  border: 1px solid #85879a;
  border-radius: 1px;
  background: linear-gradient(135deg, #fff, #c9cad8);
  display: flex;
  align-items: center;
  justify-content: center;
`;
const Fill = styled.div`
  flex: 1;
`;
const Thumb = styled.i<{ $across?: boolean }>`
  width: 8px;
  height: 8px;
  background: repeating-linear-gradient(${p => (p.$across ? '90deg' : '180deg')}, #9c9eae 0 1px, #fff 1px 2px);
`;
const Compass = styled.div`
  position: absolute;
  top: 13px;
  right: 14px;
  width: 120px;
  height: 120px;
  display: grid;
  grid-template: 20px 80px 20px / 20px 80px 20px;
  place-items: center;
  font: 17px/18px ${CJK};
  color: #a9aaa9;
  &::before {
    content: '';
    position: absolute;
    inset: 6px;
    border: 12px solid #2a2a2a;
    border-radius: 50%;
  }
`;
const Dir = styled.span<{ $area: string }>`
  grid-area: ${p => p.$area};
  position: relative;
`;
const TopFace = styled.button`
  grid-area: 2 / 2;
  width: 46px;
  height: 46px;
  border: 9px solid #9fa49f;
  background: #969ea5;
  color: #2b313a;
  font: 300 26px/26px ${CJK};
  display: flex;
  align-items: center;
  justify-content: center;
`;
const Wcs = styled.button`
  position: absolute;
  top: 152px;
  right: 50px;
  width: 48px;
  height: 17px;
  border: 1px solid #a3a3b2;
  border-radius: 4px;
  background: #85859a;
  color: #4b4b58;
  font: 11px/14px "Liberation Sans", sans-serif;
  display: flex;
  align-items: center;
  justify-content: space-around;
`;
const Ucs = styled.svg`
  position: absolute;
  left: 10px;
  bottom: 11px;
  stroke: #fff;
  fill: none;
  text {
    font: 200 17px "DejaVu Sans", sans-serif;
    fill: #fff;
    stroke: none;
  }
`;
const BottomRow = styled.div`
  display: flex;
  height: 15px;
  background: #dedde2;
`;
const TabStrip = styled.div`
  flex: 66;
  display: flex;
  border-top: 1px solid #888;
`;
const NavButton = styled.button`
  width: 14px;
  height: 14px;
  border: 1px solid #a8a8ac;
  border-left-color: #fff;
  display: flex;
  align-items: center;
  justify-content: center;
  color: #999;
`;
const Tab = styled.button<{ $on?: boolean }>`
  position: relative;
  height: 14px;
  width: 46px;
  line-height: 14px;
  text-align: left;
  padding-left: 5px;
  ${p => p.$on
    ? css`background: #000; color: #fff; padding-left: 11px; clip-path: polygon(0 0, 100% 0, calc(100% - 6px) 100%, 5px 100%);`
    : css`&::after { content: ''; position: absolute; right: 2px; top: 0; width: 1px; height: 14px; background: #444; transform: skewX(-22deg); }`}
`;
const HScroll = styled.div`
  flex: 34;
  display: flex;
  align-items: center;
  background: #fafafc;
`;
const Splitter = styled.i`
  width: 6px;
  height: 14px;
  border: 1px solid #aaa;
  background: #ece9d8;
`;
const Corner = styled.i`
  width: 17px;
  height: 15px;
  background: #dedde2;
`;

/* ---------- command window and status bar ---------- */

const CommandLog = styled.section`
  margin-top: 4px;
  height: 41px;
  background: #c6c8c5;
  border-bottom: 1px solid #8c8e8c;
  overflow: hidden;
`;
const CommandText = styled.p`
  margin: 0 0 0 -8px;
  height: 15px;
  font: 14px/15px ${CJK};
  color: #1d1f2b;
  white-space: pre;
`;
const Latin = styled.span`
  font: 12px/1 "DejaVu Sans Mono", monospace;
`;
const CommandEntry = styled.label`
  display: flex;
  align-items: center;
  height: 17px;
  background: #fff;
  overflow: hidden;
  input { flex: 1; outline: 0; font: 12px/15px "DejaVu Sans Mono", monospace; }
`;
const StatusBar = styled.footer`
  display: flex;
  height: 20px;
  border-top: 1px solid #000;
  background: linear-gradient(#989a98, #7e807e);
`;
const Coords = styled.span`
  width: 192px;
  padding-top: 4px;
  font: 10px/16px "DejaVu Sans Mono", monospace;
  white-space: pre;
  overflow: hidden;
`;
const StatusButton = styled.button<{ $on?: boolean; $w?: number }>`
  width: ${p => p.$w || 22}px;
  height: 19px;
  flex: none;
  border-left: 1px solid #4e504f;
  background: ${p => (p.$on ? 'linear-gradient(#aedbea, #d9f3fa 50%, #8ccde2)' : 'linear-gradient(#c6c8c6, #a2a4a2)')};
  display: flex;
  align-items: center;
  justify-content: center;
  gap: 3px;
`;
const StatusGap = styled.i<{ $w: number }>`
  width: ${p => p.$w}px;
  height: 19px;
  border-left: 1px solid #4e504f;
`;
const StatusRight = styled.div`
  display: flex;
  align-items: center;
  margin-left: auto;
`;
const Ratio = styled.span`
  font: 12px/16px "Liberation Mono", monospace;
`;

const menus: [string, string][] = [
  ['文件', 'F'], ['编辑', 'E'], ['视图', 'V'], ['插入', 'I'], ['格式', 'O'], ['工具', 'T'],
  ['绘图', 'D'], ['标注', 'N'], ['修改', 'M'], ['参数', 'P'], ['窗口', 'W'], ['帮助', 'H'],
];
const modes = ['infer', 'snap', 'grid', 'ortho', 'polar', 'osnap', 'osnap3d', 'otrack', 'ducs', 'dyn', 'lineweight', 'transparency', 'quickProps', 'cycling'];
const activeModes = new Set(['polar', 'osnap', 'otrack', 'ducs', 'dyn', 'transparency']);
const pageArrows: [string, string][] = [
  ['第一个', 'M2 1v8M9 1v8l-5-4z'], ['上一个', 'M8 1v8l-5-4z'], ['下一个', 'M3 1v8l5-4z'], ['最后一个', 'M9 1v8M2 1v8l5-4z'],
];

const Quick = ({ name }: { name: string }) => <QuickButton aria-label={name}><Icon name={name} /></QuickButton>;

export default function App() {
  return (
    <Page>
      <GlobalStyle />
      <Header>
        <AppButton aria-label="应用程序菜单"><Caret /></AppButton>
        <HeaderRows>
          <TitleRow>
            {['new', 'open', 'save', 'saveAs', 'print', 'undo'].map(n => <Quick key={n} name={n} />)}
            <DropButton aria-label="放弃列表"><Caret $tone="#555" /></DropButton>
            <Quick name="redo" />
            <DropButton aria-label="重做列表"><Caret $tone="#555" /></DropButton>
            <WorkspaceBox>
              <Icon name="gear" />
              <BareSelect aria-label="工作空间"><option>AutoCAD 经典</option></BareSelect>
              <Caret />
            </WorkspaceBox>
            {['match', 'props', 'sheetSet', 'teapot', 'preview', 'publish'].map(n => <Quick key={n} name={n} />)}
            <DropButton $w={14} aria-label="自定义快速访问工具栏"><Caret $tone="#000" /></DropButton>
            <Title><span>AutoCAD 2012</span><span>Drawing1.dwg</span></Title>
            <SearchArrow />
            <Search aria-label="搜索" placeholder="键入关键字或短语" />
            <Quick name="binoculars" />
            <Quick name="user" />
            <SignIn>登录</SignIn>
            <DropButton aria-label="登录选项"><Caret $tone="#444" /></DropButton>
            <Quick name="exchange" />
            <DropButton aria-label="分隔" />
            <Quick name="infoHelp" />
            <DropButton aria-label="帮助选项"><Caret $tone="#444" /></DropButton>
            <DropButton $w={19} aria-label="最小化功能区" />
            <WindowControls>
              <Minimize aria-label="最小化" />
              <Restore aria-label="还原" />
            </WindowControls>
          </TitleRow>
          <MenuRow>
            {menus.map(([name, key]) => (
              <MenuButton key={key}>{name}<Accel>(<u>{key}</u>)</Accel></MenuButton>
            ))}
            <MenuButton>设计工具箱</MenuButton>
            <WindowControls>
              <Minimize aria-label="最小化图形" />
              <Restore aria-label="还原图形" />
            </WindowControls>
          </MenuRow>
        </HeaderRows>
      </Header>

      <Dock>
        <DockRow>
          <Bar $end={2}>
            <ToolButton $clip={7} aria-label="new"><Icon name="new" /></ToolButton>
            <Tools names={['open', 'save', '|', 'print', 'preview', 'publish', 'globe', '|', 'cut', 'copy', 'paste', 'match', 'blockEdit', '|', 'undo', 'v', 'redo', 'v', '|', 'hand', 'zoomTime', 'zoomWindow', 'zoomPrev', '|', 'props', 'designCenter', 'toolPalette', 'sheetSet', 'markup', 'calc', '|', 'help']} />
          </Bar>
          <Grip />
          <Bar>
            <Tools names={['textStyle']} />
            <Pick label="文字样式" value="Standard" w={120} pad={18} />
            <Divider $w={7} />
            <Tools names={['dimStyle']} />
            <Pick label="标注样式" value="ISO-25" w={119} pad={18} />
            <Divider $w={7} />
            <Tools names={['tableStyle']} />
            <Pick label="表格样式" value="Standard" w={119} pad={4} />
            <Divider $w={7} />
            <Tools names={['leaderStyle']} />
            <Pick label="多重引线样式" value="Standard" w={119} pad={18} />
          </Bar>
        </DockRow>
        <DockRow>
          <Bar>
            <ToolButton $clip={6} aria-label="text"><Icon name="textClip" /></ToolButton>
            <Tools names={['mtext', 'textEdit', 'find', 'spell', 'textStyle', 'textScale', 'justify', 'spaceTrans']} />
          </Bar>
          <Grip />
          <Bar $end={1}>
            <Pick label="工作空间" value="AutoCAD 经典" w={176} pad={8} large />
            <Tools names={['gear', 'wsSave']} />
          </Bar>
          <Grip />
          <Bar $end={2}>
            <Tools names={['layerProps']} />
            <Pick
              label="图层" value="0" w={299} pad={3}
              lead={<><LayerIcons><Icon name="bulb" /><Icon name="sun" /><Icon name="vpFreeze" /><Icon name="unlock" /></LayerIcons><Swatch /></>}
            />
            <Tools names={['layerCurrent', 'layerPrev', 'layerState']} />
          </Bar>
          <Grip />
          <Bar $grow>
            <Pick label="颜色" value="ByLayer" w={151} pad={4} lead={<Swatch />} />
            <Divider />
            <Pick label="线型" value="ByLayer" w={160} lead={<LineSample $w={60} />} />
            <Divider />
            <Pick label="线宽" value="ByLayer" w={125} lead={<LineSample $w={35} />} />
            <Divider />
            <Combo $off>
              <BareSelect aria-label="打印样式" disabled $pad={8}><option>BYCOLOR</option></BareSelect>
            </Combo>
          </Bar>
        </DockRow>
        <DockRow>
          <Bar>
            <ToolButton $clip={6} aria-label="dimLinear"><Icon name="dimLinear" /></ToolButton>
            <Tools names={['dimAligned', 'dimArc', 'dimOrdinate', '|', 'dimRadius', 'dimJogged', 'dimDiameter', 'dimAngular', '|', 'dimQuick', 'dimBaseline', 'dimContinue', 'dimSpace', 'dimBreak', '|', 'tolerance', 'centerMark', 'dimInspect', 'jogLine', '|', 'dimEdit', 'dimTextEdit', 'dimUpdate', '|']} />
            <Pick label="当前标注样式" value="ISO-25" w={120} pad={18} />
            <Tools names={['dimStyle']} />
          </Bar>
        </DockRow>
      </Dock>

      <Frame>
        <CanvasRow>
          <Canvas>
            <Compass>
              <Dir $area="1 / 2">北</Dir>
              <Dir $area="2 / 1">西</Dir>
              <TopFace>上</TopFace>
              <Dir $area="2 / 3">东</Dir>
              <Dir $area="3 / 2">南</Dir>
            </Compass>
            <Wcs>WCS<Caret $tone="#a1a1b0" /></Wcs>
            <Ucs width="80" height="76" viewBox="0 0 80 76">
              <path d="M6.500 20v51.500M6.500 70.500H57M2.500 66.500h8v8h-8z" shapeRendering="crispEdges" />
              <text x="9" y="15">Y</text>
              <text x="62" y="69">X</text>
            </Ucs>
          </Canvas>
          <VScroll>
            <ScrollPiece aria-label="向上滚动"><Chevron d="M1 6l3-3l3 3" /></ScrollPiece>
            <ScrollPiece aria-label="垂直滑块"><Thumb /></ScrollPiece>
            <Fill />
            <ScrollPiece aria-label="向下滚动"><Chevron /></ScrollPiece>
          </VScroll>
        </CanvasRow>
        <BottomRow>
          <TabStrip>
            {pageArrows.map(([name, d]) => (
              <NavButton key={name} aria-label={name}>
                <svg width="10" height="10" viewBox="0 0 10 10"><path d={d} fill="currentColor" stroke="currentColor" /></svg>
              </NavButton>
            ))}
            <Tab $on>模型</Tab>
            <Tab>布局1</Tab>
            <Tab>布局2</Tab>
          </TabStrip>
          <HScroll>
            <Splitter />
            <ScrollPiece aria-label="向左滚动"><Chevron d="M6 1l-3 3l3 3" /></ScrollPiece>
            <Fill />
            <ScrollPiece aria-label="水平滑块"><Thumb $across /></ScrollPiece>
            <ScrollPiece aria-label="向右滚动"><Chevron d="M2 1l3 3l-3 3" /></ScrollPiece>
          </HScroll>
          <Corner />
        </BottomRow>
      </Frame>

      <CommandLog>
        <CommandText>命令<Latin>: </Latin>指定对角点或<Latin> [</Latin>栏选<Latin>(F)/</Latin>圈围<Latin>(WP)/</Latin>圈交<Latin>(CP)]:</Latin></CommandText>
        <CommandText>命令<Latin>: _.erase </Latin>找到<Latin> 9 </Latin>个</CommandText>
      </CommandLog>
      <CommandEntry>
        <CommandText as="span">命令<Latin>: </Latin></CommandText>
        <input type="text" />
      </CommandEntry>

      <StatusBar>
        <Coords>50.2966, 1039.3066, 0.0000</Coords>
        {modes.map(m => (
          <StatusButton key={m} $on={activeModes.has(m)} aria-label={m}><Icon name={m} /></StatusButton>
        ))}
        <StatusGap $w={1} />
        <StatusRight>
          <StatusButton $w={30}>模型</StatusButton>
          <StatusButton aria-label="布局"><Icon name="layoutA" /></StatusButton>
          <StatusButton aria-label="快速查看布局"><Icon name="layoutB" /></StatusButton>
          <StatusGap $w={18} />
          <StatusButton $w={54}><Icon name="anno" /><Ratio>1:1</Ratio><Caret $tone="#000" /></StatusButton>
          <StatusButton aria-label="注释可见性"><Icon name="annoVis" /></StatusButton>
          <StatusButton aria-label="自动添加比例"><Icon name="annoAuto" /></StatusButton>
          <StatusGap $w={6} />
          <StatusButton aria-label="切换工作空间"><Icon name="statusGear" /></StatusButton>
          <StatusButton aria-label="锁定"><Icon name="statusLock" /></StatusButton>
          <StatusButton aria-label="硬件加速"><Icon name="hardware" /></StatusButton>
          <StatusButton $w={32} aria-label="隔离对象"><Icon name="bulb" /></StatusButton>
          <DropButton $w={8} aria-label="状态栏菜单"><Caret $tone="#000" /></DropButton>
        </StatusRight>
      </StatusBar>
    </Page>
  );
}
